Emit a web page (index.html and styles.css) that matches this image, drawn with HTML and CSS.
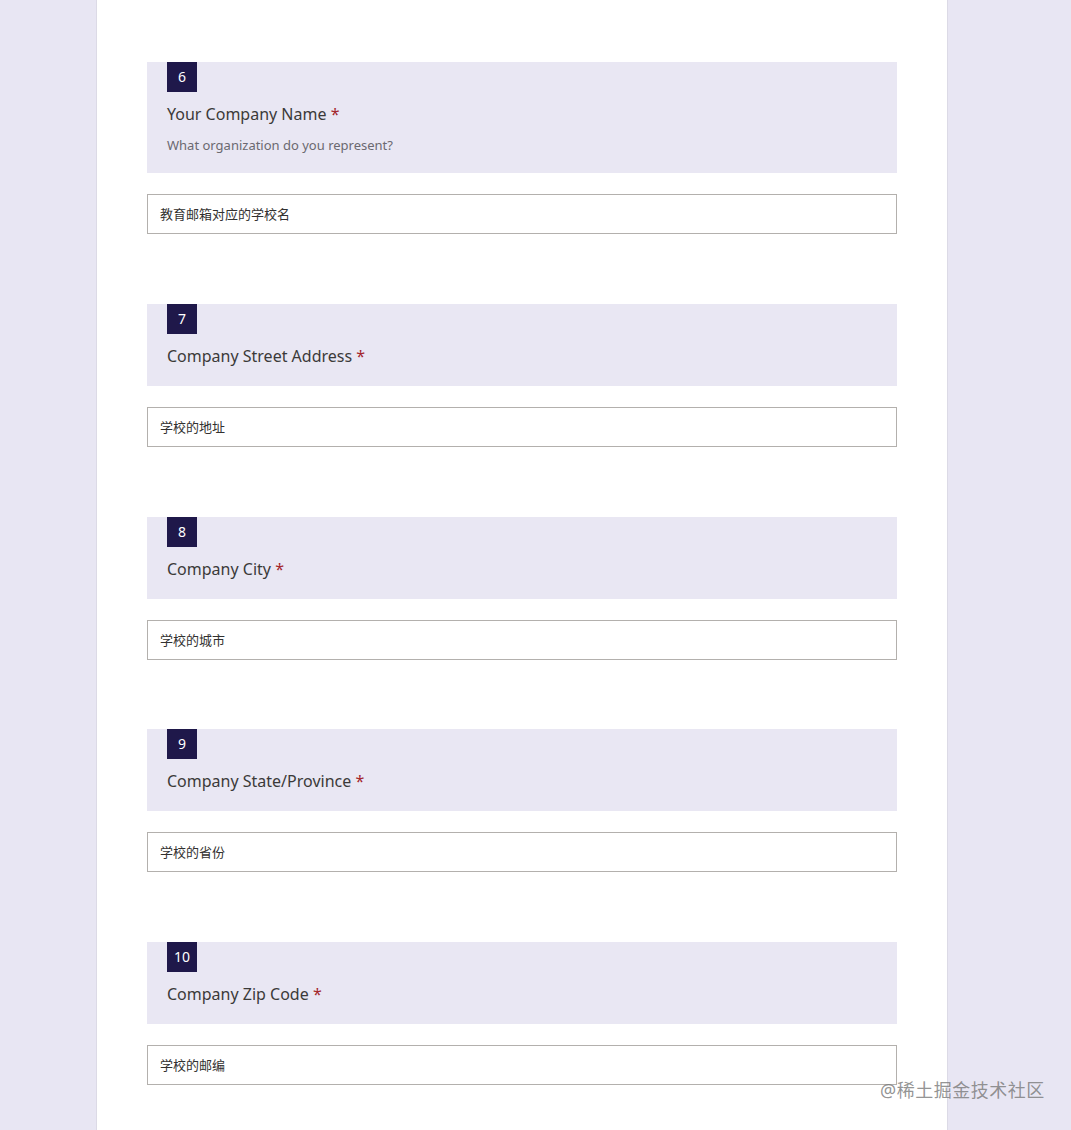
FILE: index.html
```html
<!DOCTYPE html>
<html lang="en">
<head>
  <meta charset="UTF-8">
  <meta name="viewport" content="width=device-width, initial-scale=1">
  <title>Company Information</title>
  <link rel="stylesheet" href="styles.css">
</head>
<body>
  <div class="form-card">

    <div class="pregunta">
      <div class="cabecera">
        <span class="numero">6</span>
        <div class="titulo">Your Company Name <span class="requerido">*</span></div>
        <div class="subtitulo">What organization do you represent?</div>
      </div>
      <div class="respuesta">教育邮箱对应的学校名</div>
    </div>

    <div class="pregunta">
      <div class="cabecera">
        <span class="numero">7</span>
        <div class="titulo">Company Street Address <span class="requerido">*</span></div>
      </div>
      <div class="respuesta">学校的地址</div>
    </div>

    <div class="pregunta">
      <div class="cabecera">
        <span class="numero">8</span>
        <div class="titulo">Company City <span class="requerido">*</span></div>
      </div>
      <div class="respuesta">学校的城市</div>
    </div>

    <div class="pregunta">
      <div class="cabecera">
        <span class="numero">9</span>
        <div class="titulo">Company State/Province <span class="requerido">*</span></div>
      </div>
      <div class="respuesta">学校的省份</div>
    </div>

    <div class="pregunta">
      <div class="cabecera">
        <span class="numero">10</span>
        <div class="titulo">Company Zip Code <span class="requerido">*</span></div>
      </div>
      <div class="respuesta">学校的邮编</div>
    </div>

  </div>

  <div class="marca">@稀土掘金技术社区</div>
</body>
</html>
```

FILE: styles.css
```css
body {
  margin: 0;
  background-color: #e8e6f3;
  font-family: "Noto Sans", "Noto Sans CJK SC", sans-serif;
  color: #323130;
  overflow: hidden;
}

.form-card {
  width: 852px;
  margin-left: 96px;
  padding: 62px 50px 0;
  height: 1130px;
  box-sizing: border-box;
  background: #fff;
  border-left: 1px solid #dcdae6;
  border-right: 1px solid #dcdae6;
}

.pregunta {
  margin-bottom: 69.5px;
}

.pregunta:first-child {
  margin-bottom: 70px;
}

.cabecera {
  background-color: #e9e7f3;
  padding: 0 20px 18px;
}

.numero {
  display: block;
  width: 30px;
  height: 30px;
  line-height: 30px;
  text-align: center;
  background-color: #1f184a;
  color: #fff;
  font-size: 14px;
}

.titulo {
  margin-top: 10px;
  font-size: 16px;
  line-height: 24px;
  color: #3b3a39;
}

.requerido {
  color: #a4262c;
}

.subtitulo {
  margin-top: 9px;
  font-size: 13px;
  line-height: 20px;
  color: #6b6970;
}

.respuesta {
  margin-top: 21px;
  height: 40px;
  box-sizing: border-box;
  border: 1px solid #b3b0ad;
  padding: 0 12px;
  line-height: 38px;
  font-size: 13px;
  color: #323130;
}

.marca {
  position: absolute;
  left: 880px;
  top: 1076px;
  font-size: 18px;
  color: rgba(120, 120, 120, 0.8);
  letter-spacing: 0.5px;
}
```
